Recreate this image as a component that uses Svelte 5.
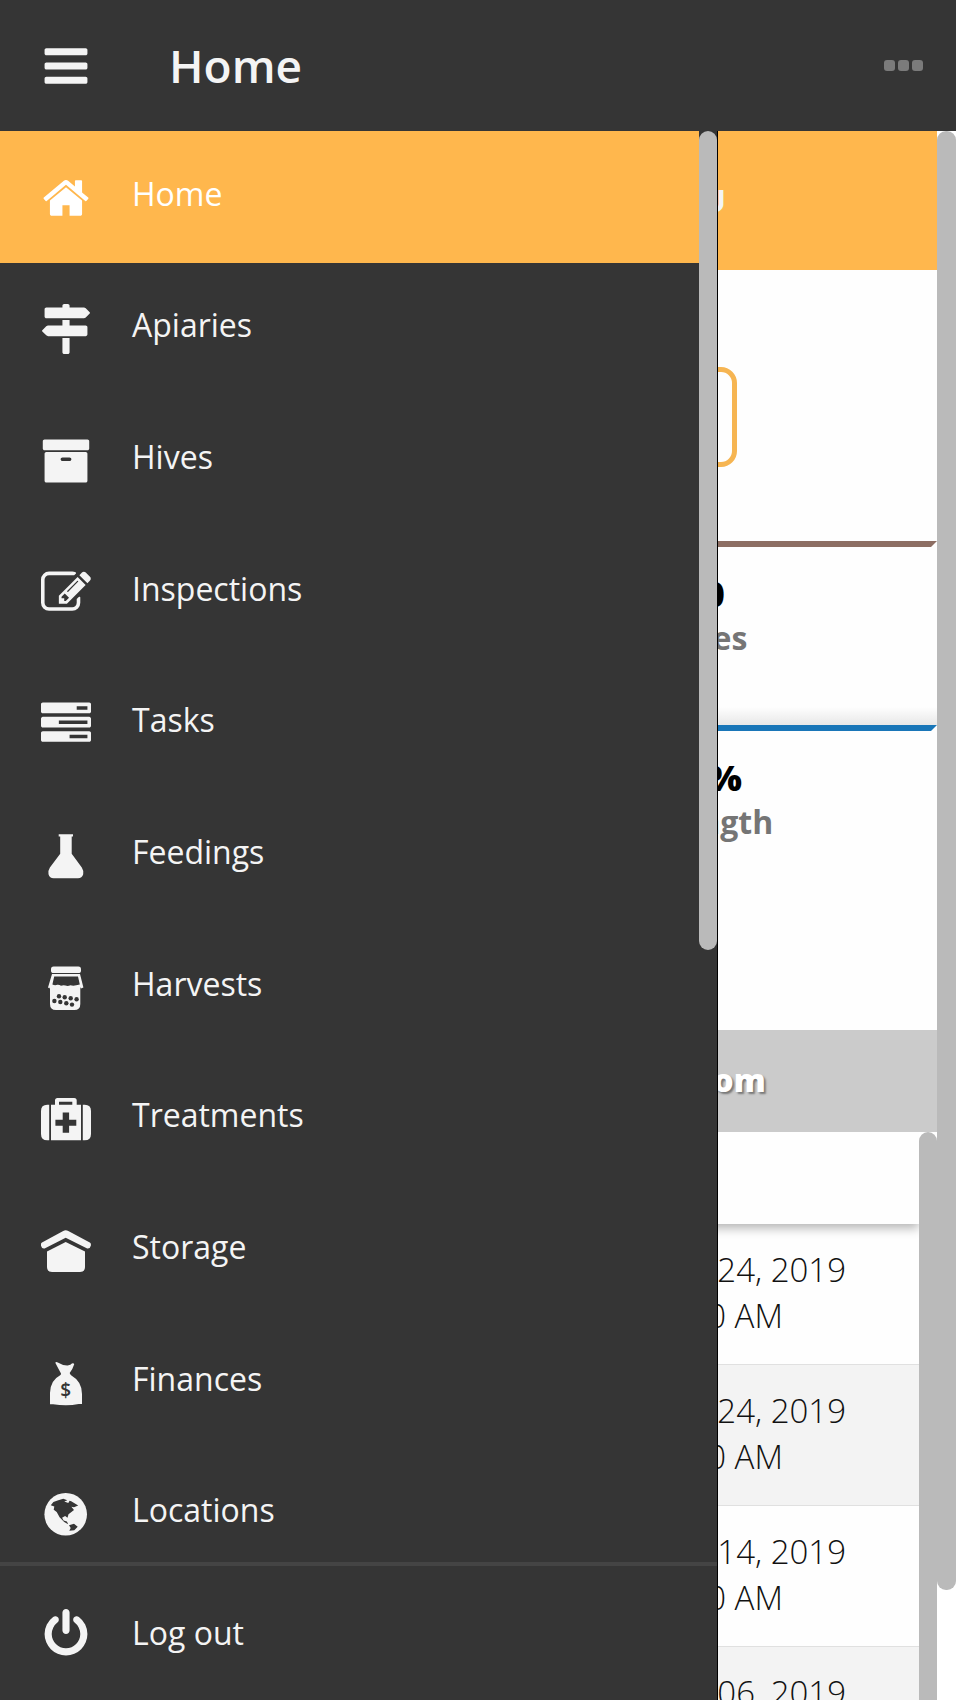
<script lang="ts">
  type Item = {
    label: string;
    icon: string;
  };

  type Row = {
    date: string;
    time: string;
  };

  // icons drawn on a 1792 unit grid
  const paths: Record<string, string> = {
    bars: "M1664 1344v128q0 26-19 45t-45 19h-1408q-26 0-45-19t-19-45v-128q0-26 19-45t45-19h1408q26 0 45 19t19 45zm0-512v128q0 26-19 45t-45 19h-1408q-26 0-45-19t-19-45v-128q0-26 19-45t45-19h1408q26 0 45 19t19 45zm0-512v128q0 26-19 45t-45 19h-1408q-26 0-45-19t-19-45v-128q0-26 19-45t45-19h1408q26 0 45 19t19 45z",
    home: "M1472 992v480q0 26-19 45t-45 19h-384v-384h-256v384h-384q-26 0-45-19t-19-45v-480q0-1 .5-3t.5-3l575-474 575 474q1 2 1 6zm223-69l-62 74q-8 9-21 11h-3q-13 0-21-7l-692-577-692 577q-12 8-24 7-13-2-21-11l-62-74q-8-10-7-23.5t11-21.5l719-599q32-26 76-26t76 26l244 204v-195q0-14 9-23t23-9h192q14 0 23 9t9 23v408l219 182q10 8 11 21.5t-7 23.5z",
    signs: "M1745 297q10 10 10 23t-10 23l-141 141q-28 28-68 28h-1344q-26 0-45-19t-19-45v-256q0-26 19-45t45-19h576v-64q0-26 19-45t45-19h128q26 0 45 19t19 45v64h512q40 0 68 28zM768 1216h256v512q0 26-19 45t-45 19h-128q-26 0-45-19t-19-45v-512zM1600 768q26 0 45 19t19 45v256q0 26-19 45t-45 19h-1344q-40 0-68-28l-141-141q-10-10-10-23t10-23l141-141q28-28 68-28h512v-192h256v192h576z",
    archive: "M1088 832q0-26-19-45t-45-19h-256q-26 0-45 19t-19 45 19 45 45 19h256q26 0 45-19t19-45zm576-192v960q0 26-19 45t-45 19h-1408q-26 0-45-19t-19-45v-960q0-26 19-45t45-19h1408q26 0 45 19t19 45zm64-448v256q0 26-19 45t-45 19h-1536q-26 0-45-19t-19-45v-256q0-26 19-45t45-19h1536q26 0 45 19t19 45z",
    edit: "M888 1184l116-116-152-152-116 116v56h96v96h56zm440-720q-16-16-33 1l-350 350q-17 17-1 33t33-1l350-350q17-17 1-33zm80 594v190q0 119-84.5 203.5t-203.5 84.5h-832q-119 0-203.5-84.5t-84.5-203.5v-832q0-119 84.5-203.5t203.5-84.5h832q63 0 117 25 15 7 18 23 3 17-9 29l-49 49q-14 14-32 8-23-6-45-6h-832q-66 0-113 47t-47 113v832q0 66 47 113t113 47h832q66 0 113-47t47-113v-126q0-13 9-22l64-64q15-15 35-7t20 29zm-96-738l288 288-672 672h-288v-288zm444 132l-92 92-288-288 92-92q28-28 68-28t68 28l152 152q28 28 28 68t-28 68z",
    tasks: "M1024 1408h640v-128h-640v128zm-384-512h1024v-128h-1024v128zm640-512h384v-128h-384v128zm512 832v256q0 26-19 45t-45 19h-1664q-26 0-45-19t-19-45v-256q0-26 19-45t45-19h1664q26 0 45 19t19 45zm0-512v256q0 26-19 45t-45 19h-1664q-26 0-45-19t-19-45v-256q0-26 19-45t45-19h1664q26 0 45 19t19 45zm0-512v256q0 26-19 45t-45 19h-1664q-26 0-45-19t-19-45v-256q0-26 19-45t45-19h1664q26 0 45 19t19 45z",
    power: "M1664 896q0 156-61 298t-164 245-245 164-298 61-298-61-245-164-164-245-61-298q0-182 80.5-343t226.5-270q43-32 95.5-25t83.5 50q32 42 24.5 94.5t-49.5 84.5q-98 74-151.5 181t-53.5 228q0 104 40.5 198.5t109.5 163.5 163.5 109.5 198.5 40.5 198.5-40.5 163.5-109.5 109.5-163.5 40.5-198.5q0-121-53.5-228t-151.5-181q-42-32-49.5-84.5t24.5-94.5q31-43 84-50t95 25q146 109 226.5 270t80.5 343zm-640-768v640q0 52-38 90t-90 38-90-38-38-90v-640q0-52 38-90t90-38 90 38 38 90z",
  };

  const items: Item[] = [
    { label: "Home", icon: "home" },
    { label: "Apiaries", icon: "signs" },
    { label: "Hives", icon: "archive" },
    { label: "Inspections", icon: "edit" },
    { label: "Tasks", icon: "tasks" },
    { label: "Feedings", icon: "flask" },
    { label: "Harvests", icon: "jar" },
    { label: "Treatments", icon: "medkit" },
    { label: "Storage", icon: "storage" },
    { label: "Finances", icon: "bag" },
    { label: "Locations", icon: "globe" },
  ];

  const rows: Row[] = [
    { date: "Jun 24, 2019", time: "9:00 AM" },
    { date: "Jun 24, 2019", time: "9:00 AM" },
    { date: "Jun 14, 2019", time: "9:00 AM" },
    { date: "Jun 06, 2019", time: "" },
  ];

  let active = $state("Home");
  let open = $state(true);
</script>

{#snippet icon(name: string)}
  {#if paths[name]}
    <svg class="icon" viewBox="0 0 1792 1792" aria-hidden="true"><path d={paths[name]} /></svg>
  {:else}
    <svg class="icon" viewBox="0 0 50 50" aria-hidden="true">
      {#if name === "flask"}
        <path d="M17.7 3.2H32v2.3h-1.3V22.8L40.8 36.5Q43 40 42.2 43.2 41 47.2 37 47.2H12.6Q8.6 47.2 7.5 43.2 6.7 40 8.9 36.5L19.2 22.8V5.5h-1.5z" />
      {:else if name === "jar"}
        <rect x="10" y="3.6" width="30" height="6.4" rx="2.6" />
        <path fill-rule="evenodd" d="M11 11h28l3.4 13.6-2.4.9-.7-1.5v17q0 6-6 6H15q-6 0-6-6V24l-.4 1.5-1.6-.9zM13.2 13.6l-1.8 8q2.6 1 5 .2 2-.2 3.600 1 2.300-1 4.400-.2 2.600 1 5-.4 3 1.200 9.400-.6L37 13.600z" />
        <g class="cut">
          <circle cx="18" cy="33.3" r="2.2" />
          <circle cx="23.7" cy="34.3" r="2.2" />
          <circle cx="29.7" cy="35.3" r="2.2" />
          <circle cx="35.6" cy="36.3" r="2.2" />
          <circle cx="13.4" cy="38" r="2.2" />
          <circle cx="19.3" cy="39" r="2.2" />
          <circle cx="25.3" cy="40.3" r="2.2" />
          <circle cx="31" cy="41.6" r="2.2" />
        </g>
      {:else if name === "medkit"}
        <path d="M8.2 10.8v35.5H6.3Q0 46.3 0 40V17q0-6.2 6.3-6.2zM41.8 10.8h1.9Q50 10.8 50 17v23q0 6.3-6.3 6.3h-1.9z" />
        <path fill-rule="evenodd" d="M10 10.8h4V6.5Q14 4 16.5 4h16.7q2.5 0 2.5 2.5v4.3H40v35.5H10zM18 7.7v3.1h13.3V7.7zM21.700 18.400v7.400h-7.300v6h7.300v7h6.400v-7h7.200v-6h-7.200v-7.400z" />
      {:else if name === "storage"}
        <path d="M24.7 4.2q1.3 0 2.6.8L48.8 16.6q1.6 1 1 3.1-.8 3.3-3.6 2.8L24.7 11.7 3.6 22.5Q.8 23 0 19.7q-.6-2.1 1-3.1L22.2 5q1.2-.8 2.5-.8z" />
        <path d="M24.7 16L44 25.5V41q0 5-5 5H11q-5 0-5-5V25.5z" />
      {:else if name === "bag"}
        <path d="M14.3 4.7q.6-1.2 2.5-.3 5.3 3.2 9.8 3 3.4-.3 4.3-1.9 2-.6 2.3.8-1.600 5.200-4.500 8.800.2 1.500 1.700 2.400Q41 23.500 41 36v10H37.700q-12 2.600-25.600.2H9V35Q9.300 22.500 18.800 17.600q1.300-.8 1.200-2.200Q17 10 14.300 4.700z" />
        <text class="cut" x="24.7" y="38.5" text-anchor="middle">$</text>
      {:else if name === "globe"}
        <circle cx="24.7" cy="25.3" r="21.3" />
        <path class="cut" d="M9.8 16.3l2.6-3.3 4.900-1.700 5-1.600 4 1.600-3 1.300 4 1.500 1.300-2.400 1.600.6 7 4.200-4.200 1.700-2.600-.4 2.600 3.100-5.500 4.300-1 3.500-2.400-1.600-3 1.600 1.500 2.800 3.300 1 1.300 2.800-4-2.200-4.600-4.800-2.900-5.300-3-2.200.6-3.300z" />
        <path class="cut" d="M28 36.300l5-1.500 3.700 3-3.400 3.400-5 .6 1.400-2.900z" />
      {/if}
    </svg>
  {/if}
{/snippet}

<div class="app">
  <header class="topbar">
    <button class="menu-btn" aria-label="Menu" onclick={() => (open = !open)}>
      {@render icon("bars")}
    </button>
    <h1>Home</h1>
    <button class="more-btn" aria-label="More">
      <span class="dot"></span>
      <span class="dot"></span>
      <span class="dot"></span>
    </button>
  </header>

  <div class="body">
    <main class="page">
      <div class="content">
        <div class="banner">MENU</div>
        <button class="outline-btn" aria-label="Select"></button>

        <div class="card brown">
          <strong>10</strong>
          <span>Hives</span>
        </div>
        <div class="card blue">
          <strong>80%</strong>
          <span>Strength</span>
        </div>

        <div class="tabs">Custom</div>
        <div class="list">
          <div class="records">
            <div class="filter"></div>
            <table>
              <tbody>
                {#each rows as row}
                  <tr>
                    <td class="kind"></td>
                    <td>{row.date}<br />{row.time}</td>
                  </tr>
                {/each}
              </tbody>
            </table>
          </div>
          <div class="bar"><div class="thumb"></div></div>
        </div>
      </div>
      <div class="bar"><div class="thumb page-thumb"></div></div>
    </main>

    {#if open}
      <nav class="drawer">
        <div class="scroller">
          <ul class="menu">
            {#each items as item}
              <li>
                <a href="#{item.icon}" class="item" class:active={active === item.label} onclick={() => (active = item.label)}>
                  {@render icon(item.icon)}
                  <span class="label">{item.label}</span>
                </a>
              </li>
            {/each}
          </ul>
          <div class="bar dark"><div class="thumb menu-thumb"></div></div>
        </div>
        <a href="#logout" class="item logout">
          {@render icon("power")}
          <span class="label">Log out</span>
        </a>
      </nav>
    {/if}
  </div>
</div>

<style>
  :global(body) {
    margin: 0;
    background-color: #fff;
  }
  .app {
    display: flex;
    flex-direction: column;
    height: 100vh;
    overflow: hidden;
    font-family: "Open Sans", "Noto Sans", sans-serif;
    font-size: 32px;
    color: #000;
  }
  button {
    border: 0;
    padding: 0;
    background: none;
    cursor: pointer;
  }
  .icon {
    display: block;
    flex: none;
    width: 50px;
    height: 50px;
    fill: #f4f4f4;
  }
  .icon .cut {
    fill: #353535;
  }
  .icon text {
    font-size: 19px;
    font-weight: 600;
  }
  .topbar {
    display: flex;
    align-items: center;
    flex: none;
    height: 131px;
    padding: 0 33px 0 41px;
    background-color: #353535;
  }
  .topbar h1 {
    flex: 1;
    margin: 0 0 0 78px;
    padding-bottom: 2px;
    font-size: 46px;
    font-weight: 600;
    line-height: 64px;
    color: #f4f4f4;
  }
  .more-btn {
    display: flex;
    gap: 3px;
  }
  .dot {
    width: 11px;
    height: 11px;
    border-radius: 3px;
    background-color: #7b7b7b;
  }
  .body {
    position: relative;
    flex: 1;
    min-height: 0;
  }
  .page {
    display: flex;
    height: 100%;
  }
  .content {
    display: flex;
    flex-direction: column;
    flex: 1;
    overflow: hidden;
    background-color: #fefefe;
  }
  .content > * {
    flex: none;
  }
  .banner {
    padding-right: 211px;
    font-size: 30px;
    font-weight: 700;
    line-height: 139px;
    text-align: right;
    color: #f4f4f4;
    background-color: #ffb74d;
  }
  .outline-btn {
    box-sizing: border-box;
    height: 100px;
    margin: 97px 200px 74px;
    border: 5px solid #f6b552;
    border-radius: 16px;
  }
  .card {
    display: flex;
    flex-direction: column;
    align-items: center;
    box-sizing: border-box;
    width: 50%;
    height: 184px;
    margin-left: 50%;
    padding: 24px 0 0 8px;
    border-top: 6px solid;
    border-right: 6px solid transparent;
    font-weight: 700;
  }
  .card strong {
    font-size: 36px;
    line-height: 46px;
  }
  .card span {
    line-height: 42px;
    color: #757575;
  }
  .brown {
    border-top-color: #8d6e63;
    background-image: linear-gradient(to top, #e8e8e8, #fefefe 18px);
  }
  .blue {
    margin-bottom: 121px;
    border-top-color: #1976b8;
  }
  .tabs {
    padding: 0 0 2px 50%;
    font-weight: 800;
    line-height: 100px;
    text-align: center;
    text-shadow: 2px 2px 2px #777;
    color: #fff;
    background-color: #cbcbcb;
  }
  .content > .list {
    display: flex;
    flex: 1;
    min-height: 0;
  }
  .records {
    flex: 1;
    overflow: hidden;
  }
  .filter {
    position: relative;
    height: 92px;
    background-color: #fefefe;
    box-shadow: 0 4px 10px rgba(0, 0, 0, 0.3);
  }
  table {
    width: 100%;
    border-collapse: collapse;
    table-layout: fixed;
  }
  td {
    height: 92px;
    padding: 23px 0 25px;
    border-bottom: 1px solid #e0e0e0;
    font-size: 33px;
    font-weight: 300;
    line-height: 46px;
    vertical-align: top;
    white-space: nowrap;
    color: #111;
  }
  .kind {
    width: 72%;
  }
  tr:nth-child(even) {
    background-color: #f3f3f3;
  }
  .bar {
    flex: none;
    width: 18px;
    background-color: #fff;
  }
  .dark {
    background-color: #353535;
  }
  .thumb {
    height: 120%;
    border-radius: 9px;
    background-color: #bababa;
  }
  .page > .bar {
    width: 19px;
  }
  .page-thumb {
    height: 93%;
  }
  .drawer {
    position: absolute;
    top: 0;
    bottom: 0;
    left: 0;
    display: flex;
    flex-direction: column;
    width: 75%;
    border-right: 1px solid #000;
    background-color: #353535;
  }
  .scroller {
    display: flex;
    flex: 1;
    min-height: 0;
    overflow: hidden;
  }
  .menu-thumb {
    height: 819px;
  }
  .menu {
    display: grid;
    grid-auto-rows: 1fr;
    flex: 1;
    height: 1448px;
    margin: 0;
    padding: 0;
    list-style: none;
  }
  .item {
    display: flex;
    align-items: center;
    gap: 41px;
    box-sizing: border-box;
    height: 100%;
    padding: 2px 0 0 41px;
    color: #f4f4f4;
    text-decoration: none;
  }
  .active {
    color: #fff;
    background-color: #ffb74d;
  }
  .active .icon {
    fill: #fff;
  }
  .label {
    padding-bottom: 8px;
    line-height: 44px;
  }
  .logout {
    flex: none;
    height: 138px;
    border-top: 4px solid #444;
  }
  .logout .label {
    padding-bottom: 3px;
  }
</style>
